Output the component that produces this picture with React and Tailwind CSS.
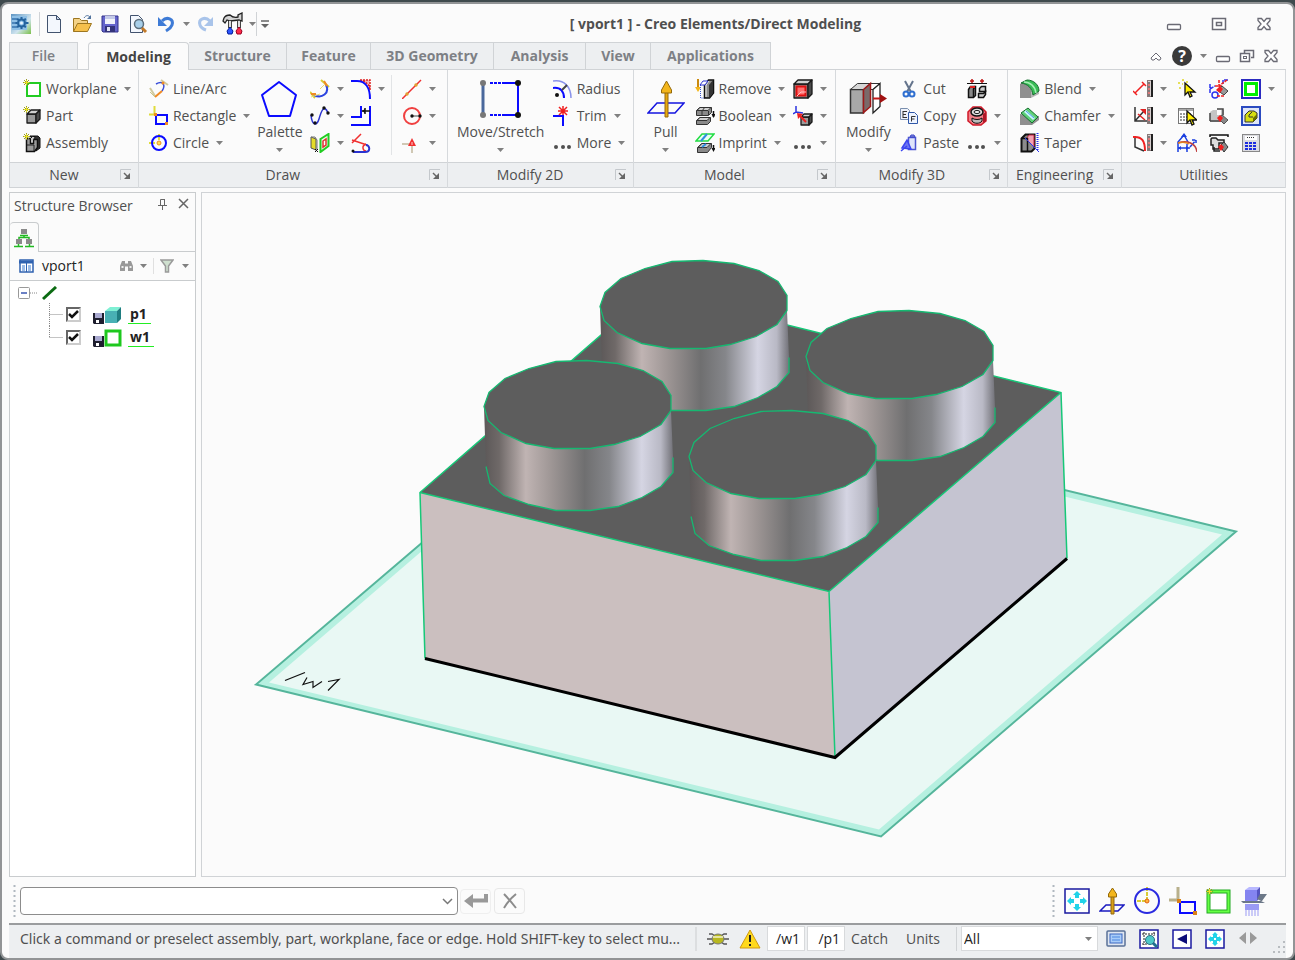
import React from "react";

/* ---------- small shared pieces ---------- */

function Svg({ w = 20, h = 20, children, className = "" }) {
  return (
    <svg
      width={w}
      height={h}
      viewBox={`0 0 ${w} ${h}`}
      fill="none"
      aria-hidden="true"
      className={`shrink-0 ${className}`}
    >
      {children}
    </svg>
  );
}

function Caret({ className = "" }) {
  return (
    <Svg w={7} h={4} className={className}>
      <path d="M0 0h7L3.5 4z" fill="#808080" />
    </Svg>
  );
}

function Spark({ x = 0, y = 0 }) {
  return (
    <g transform={`translate(${x} ${y})`}>
      <path d="M3.5 0v7M0 3.5h7M1 1l5 5M6 1L1 6" stroke="#9a9a28" />
      <path d="M3.5 1v5M1 3.5h5" stroke="#e8e22a" />
    </g>
  );
}

// grey isometric block, used by most of the solid modelling icons
function Block({ x, y, s = 9, d = 4, front = "#9a9a9a" }) {
  return (
    <g transform={`translate(${x} ${y})`} stroke="#1a1a1a" strokeWidth="1.3" strokeLinejoin="round">
      <path d={`M0 ${d}h${s}v${s}H0z`} fill={front} />
      <path d={`M0 ${d}L${d} 0h${s}l${-d} ${d}z`} fill="#d0d0d0" />
      <path d={`M${s} ${d}l${d} ${-d}v${s}l${-d} ${d}z`} fill="#4a4a4a" />
    </g>
  );
}

/* ---------- title bar icons ---------- */

const LogoIcon = () => (
  <Svg>
    <defs>
      <linearGradient id="logo" x1="0" y1="0" x2="1" y2="1">
        <stop offset="0" stopColor="#5d95c4" />
        <stop offset=".6" stopColor="#cfe4ee" />
        <stop offset="1" stopColor="#7cc04a" />
      </linearGradient>
    </defs>
    <rect width="20" height="20" fill="url(#logo)" />
    <rect x="1" y="2" width="15" height="14" fill="#8fc0e6" />
    <path d="M1 5h5M1 9h4M1 13h5" stroke="#4c86bc" strokeWidth="2" />
    <circle cx="10.5" cy="9" r="3.5" fill="#7fb6e2" stroke="#24639e" strokeWidth="2" />
    <path
      d="M10.500 3v2M10.500 13v2M4.500 9h2M14.500 9h3M6 5l2 1M15 5l-2 1M6 13l2-1M15 13l-2-1"
      stroke="#24639e"
      strokeWidth="2"
    />
    <circle cx="10.5" cy="9" r="1.5" fill="#e8f5ff" />
  </Svg>
);

const NewIcon = () => (
  <Svg>
    <path d="M3.5 1.5h9l4 4v13h-13z" fill="#f3f7fd" stroke="#42536e" />
    <path d="M12.5 1.5v4h4z" fill="#c8d6ea" stroke="#42536e" />
  </Svg>
);

const OpenIcon = () => (
  <Svg>
    <path d="M1.5 17.5v-13h6l2 2h6v4" fill="#f3d287" stroke="#9d7620" />
    <path d="M1.5 17.5l4-8h14l-4 8z" fill="#f5c04c" stroke="#9d7620" />
    <path d="M12 4c2-3 4-3 6-1" stroke="#52749e" />
    <path d="M19 1v4h-4z" fill="#52749e" />
  </Svg>
);

const SaveIcon = () => (
  <Svg>
    <path d="M2 2h16v16H3l-1-1z" fill="#6464cc" stroke="#33338a" />
    <rect x="5" y="2" width="10" height="8" fill="#f1f3fa" />
    <rect x="5" y="2" width="10" height="3" fill="#c4cae8" />
    <rect x="5" y="12" width="10" height="6" fill="#33337a" />
    <rect x="7" y="13" width="3" height="4" fill="#e3e5f4" />
  </Svg>
);

const PreviewIcon = () => (
  <Svg>
    <path d="M2.5 1.5h8l4 4v13h-12z" fill="#f3f7fd" stroke="#42536e" />
    <circle cx="11" cy="10" r="4.5" fill="#a8cfe9" stroke="#5c6e7c" strokeWidth="1.5" />
    <path d="M14 14l4 4" stroke="#c37a28" strokeWidth="3" />
  </Svg>
);

const UndoIcon = () => (
  <Svg>
    <path d="M6 7c5-5 12-2 10 4-1 3-3 4-6 6" stroke="#3e7bd6" strokeWidth="3" />
    <path d="M2 3v9h9z" fill="#3e7bd6" />
  </Svg>
);

const RedoIcon = () => (
  <Svg>
    <path d="M14 7C9 2 2 5 4 11c1 3 3 4 6 5" stroke="#a9c4ea" strokeWidth="3" />
    <path d="M17 3v9H8z" fill="#a9c4ea" />
  </Svg>
);

const ToolsIcon = () => (
  <Svg w={24} h={24}>
    <path d="M2 6c1-2 3-3 6-3 2 2 4 3 8 2V3l4-2v8l-3-1-9 1-3-1-2 3-2-2z" fill="#d4d4d4" stroke="#222" strokeWidth="1.3" />
    <path d="M8 9v7M17 9v7" stroke="#444" strokeWidth="4" />
    <path d="M8 9v6M17 9v6" stroke="#ddd" strokeWidth="2" />
    <path d="M8 15l3 4-1 3H6l-1-3z" fill="#2b55ff" stroke="#001a9a" />
    <path d="M17 15l3 4-1 3h-4l-1-3z" fill="#ff2b4a" stroke="#9a0020" />
  </Svg>
);

/* ---------- window control glyphs ---------- */

const MinGlyph = () => (
  <Svg w={16} h={16}>
    <rect x="1.5" y="8.500" width="13" height="5" rx="1" fill="#fff" stroke="#6a6a74" strokeWidth="1.3" />
  </Svg>
);

const MaxGlyph = () => (
  <Svg w={16} h={16}>
    <rect x="1.5" y="2.5" width="13" height="11" fill="#fff" stroke="#6a6a74" strokeWidth="1.5" />
    <rect x="5.5" y="6.500" width="5" height="3" stroke="#6a6a74" strokeWidth="1.5" />
  </Svg>
);

const RestoreGlyph = () => (
  <Svg w={16} h={16}>
    <path d="M5.5 5V2.5h9v7H12" stroke="#6a6a74" strokeWidth="1.5" />
    <rect x="1.5" y="5.5" width="9" height="8" fill="#fff" stroke="#6a6a74" strokeWidth="1.5" />
    <rect x="4.500" y="8.500" width="3" height="2" stroke="#6a6a74" />
  </Svg>
);

const CloseGlyph = () => (
  <Svg w={16} h={16}>
    <path
      d="M2 2.5h3.500L8 5.500l2.500-3H14v2L11 8l3 3.500v2h-3.500L8 10.500l-2.500 3H2v-2L5 8 2 4.500z"
      fill="#fff"
      stroke="#6a6a74"
      strokeWidth="1.3"
    />
  </Svg>
);

/* ---------- ribbon icons ---------- */

const WorkplaneIcon = () => (
  <Svg>
    <rect x="5" y="4" width="13" height="13" fill="#fff" stroke="#22cc22" strokeWidth="2" />
    <Spark x={1} />
  </Svg>
);

const PartIcon = () => (
  <Svg>
    <Block x={5} y={4} s={9} d={4} />
    <Spark x={1} />
  </Svg>
);

const AssemblyIcon = () => (
  <Svg>
    <path d="M8 3h8l2 2v10l-4 3V8z" fill="#333" stroke="#111" />
    <path d="M4.500 5.500h4v5h3v-4h4v8l-3 4h-8z" fill="#9a9a9a" stroke="#111" strokeWidth="1.5" />
    <path d="M8.500 5.500l2-2h3l-2 3" fill="#ccc" stroke="#111" />
    <path d="M5 12h7v6" stroke="#222" />
    <Spark x={1} />
  </Svg>
);

const LineArcIcon = () => (
  <Svg>
    <path d="M1 9l5 8M12 1l7 5" stroke="#d0caa0" strokeWidth="2" />
    <path d="M7 5c7-4 10 1 6 7" stroke="#3a4fd8" strokeWidth="1.5" />
    <path d="M13 12l-7 6" stroke="#f08a24" strokeWidth="2" />
    <path d="M1 13l5 5" stroke="#c9c48a" />
    <circle cx="14" cy="4" r="1.5" fill="#f08a24" />
  </Svg>
);

const RectangleIcon = () => (
  <Svg>
    <path d="M5.5 0v8M0 8.500h8" stroke="#e0dc3a" strokeWidth="2" />
    <rect x="7" y="9" width="11" height="9" stroke="#0b0bff" strokeWidth="2" />
    <rect x="5" y="7" width="3" height="3" fill="#f08a24" />
    <rect x="16" y="16" width="3" height="3" fill="#f08a24" />
  </Svg>
);

const CircleIcon = () => (
  <Svg>
    <path d="M10 1v6M0 10h6" stroke="#e0dc3a" strokeWidth="2" />
    <circle cx="10" cy="10" r="7" stroke="#0b0bff" strokeWidth="2" />
    <circle cx="10" cy="10" r="2" fill="#ffe14a" stroke="#f08a24" />
  </Svg>
);

const PentagonIcon = () => (
  <Svg w={40} h={42}>
    <path d="M19 4l17 13-6 21H9L2 17z" stroke="#0b0bff" strokeWidth="2" strokeLinejoin="round" />
  </Svg>
);

const ArcIcon = () => (
  <Svg>
    <path d="M0 13l5 6M11 1l8 7" stroke="#d8cd36" strokeWidth="2" />
    <path d="M4 16c8 4 16-2 12-10" stroke="#2b44e0" strokeWidth="2" />
    <path d="M1 15h5M14 2l3 5" stroke="#f08a24" strokeWidth="2" />
    <path d="M1 18l9-3M10 10l5-5" stroke="#e8dc70" />
  </Svg>
);

const SplineIcon = () => (
  <Svg>
    <path d="M1 9c1 11 6 11 8 4s5-16 9-6" stroke="#2b33d0" strokeWidth="1.5" />
    <g fill="#111">
      <circle cx="2" cy="9" r="1.700" />
      <circle cx="5" cy="17" r="1.700" />
      <circle cx="14" cy="2" r="1.700" />
      <circle cx="18" cy="7" r="1.700" />
    </g>
  </Svg>
);

const ProjectIcon = () => (
  <Svg>
    <path d="M1 4v11l5 2V6z" fill="#e4dc2a" stroke="#555" />
    <path d="M1 4h4l2 3v9" stroke="#777" />
    <path d="M5 16l3 3M5 19l3-3" stroke="#111" />
    <path d="M10.5 6l8-5v12l-8 6z" fill="#e8ffe8" stroke="#22cc22" strokeWidth="2" />
    <path d="M13 8l3-2v6l-3 2z" fill="#fff" stroke="#e03030" strokeWidth="1.5" />
  </Svg>
);

const FilletIcon = () => (
  <Svg>
    <path d="M9 1h10v10c0-4-4-9-10-10z" fill="#f7b0b0" stroke="#e02020" strokeWidth="1.5" strokeDasharray="2 1" />
    <path d="M0 2h6c8 0 13 6 13 18" stroke="#0b0bff" strokeWidth="2" />
  </Svg>
);

const OffsetIcon = () => (
  <Svg>
    <path d="M0 11h10V0M0 19h19V0" stroke="#0b0bff" strokeWidth="2" />
    <path d="M11 5h8M14 2v6" stroke="#111" strokeWidth="1.5" />
    <path d="M11 5l3-2v4z" fill="#111" />
  </Svg>
);

const TangentIcon = () => (
  <Svg>
    <path d="M1 7l15 5M1 10l9-9" stroke="#f03030" strokeWidth="1.5" />
    <path d="M15 11c-5 2-3 7 0 7" stroke="#f03030" strokeWidth="1.5" />
    <path d="M2 19h12c6 0 5-7 1-7" stroke="#2b33d0" strokeWidth="2" />
    <circle cx="2" cy="18" r="1.5" fill="#111" />
  </Svg>
);

const RedLineIcon = () => (
  <Svg>
    <path d="M0 20L19 1" stroke="#f03030" strokeWidth="1.5" />
    <circle cx="5" cy="15" r="1.700" fill="#e0a030" />
    <circle cx="14" cy="6" r="1.700" fill="#e0a030" />
  </Svg>
);

const RedCircleIcon = () => (
  <Svg>
    <circle cx="10" cy="10" r="8" stroke="#f04040" strokeWidth="2" />
    <path d="M10 10h8" stroke="#444" />
    <circle cx="10" cy="10" r="1.700" fill="#111" />
    <circle cx="18" cy="10" r="1.700" fill="#111" />
  </Svg>
);

const RedArrowIcon = () => (
  <Svg>
    <path d="M0 11h10v9" stroke="#d0c8b4" strokeWidth="2" />
    <path d="M10 5l4 8H6z" fill="#f03030" />
    <path d="M10 9v3" stroke="#ffd0d0" />
  </Svg>
);

const StretchIcon = () => (
  <Svg w={42} h={40}>
    <path d="M3 4v32" stroke="#4a689c" strokeWidth="3" />
    <path d="M10 4h14M10 36h14" stroke="#0b0bff" strokeWidth="2" strokeDasharray="3 1" />
    <path d="M24 4h14v32H24" stroke="#0b0bff" strokeWidth="2" />
    <circle cx="3" cy="4" r="3" fill="#777" />
    <circle cx="3" cy="36" r="3" fill="#777" />
    <circle cx="38" cy="4" r="3" fill="#111" />
    <circle cx="38" cy="36" r="3" fill="#111" />
  </Svg>
);

const RadiusIcon = () => (
  <Svg>
    <path d="M0 2c11-2 18 6 18 17" stroke="#8a93ea" strokeWidth="1.5" />
    <path d="M0 9c8-1 11 4 11 10" stroke="#0b0bff" strokeWidth="2" />
    <circle cx="4" cy="16" r="2" fill="#111" />
    <path d="M9 11l5-5" stroke="#444" strokeWidth="2" />
  </Svg>
);

const TrimIcon = () => (
  <Svg>
    <path d="M0 10h10v10" stroke="#0b0bff" strokeWidth="2" />
    <path d="M10 0v9M5 5h10M6 1l8 8M14 1L6 9" stroke="#f02020" strokeWidth="1.5" />
  </Svg>
);

const MoreIcon = () => (
  <Svg>
    <g fill="#505050">
      <circle cx="3" cy="14" r="2" />
      <circle cx="10" cy="14" r="2" />
      <circle cx="16" cy="14" r="2" />
    </g>
  </Svg>
);

const PullIcon = () => (
  <Svg w={38} h={40}>
    <path d="M1 34l9-10h27l-9 10z" stroke="#1515e0" strokeWidth="1.5" />
    <path d="M18 38V12h3v26z" fill="#e8a810" stroke="#94690a" />
    <path d="M19.500 2l5 9v3h-10v-3z" fill="#f3b61c" stroke="#94690a" />
  </Svg>
);

const RemoveIcon = () => (
  <Svg>
    <path d="M3 0v9" stroke="#c98a10" strokeWidth="2" />
    <path d="M0 8h6l-3 5z" fill="#f3b61c" />
    <path d="M5.5 6v13h4" stroke="#3a56d0" strokeDasharray="1 1" />
    <path d="M9.500 6l4-5h5v13l-4 5h-5z" fill="#8c8c8c" stroke="#111" strokeWidth="1.5" />
    <path d="M14 6l4-5v13l-4 5z" fill="#333" />
    <path d="M11 18V6l3-4" stroke="#eee" />
    <path d="M5 6l3-4h5l-3 4z" fill="#fff" stroke="#2b33d0" />
  </Svg>
);

const BooleanIcon = () => (
  <Svg>
    <path d="M1.5 4.500l3-3h12v5l-3 3h-12z" fill="#8a8a8a" stroke="#333" strokeLinejoin="round" />
    <path d="M2 4.500h11l3-3H5z" fill="#d0d0d0" stroke="#333" />
    <path d="M7 5l3-4M7 5v4M13.500 5v4" stroke="#333" />
    <path d="M1.500 14.500l3-3h11v4l-3 3h-11z" fill="#8a8a8a" stroke="#333" strokeLinejoin="round" />
    <path d="M2 14.500h10l3-3H5z" fill="#d0d0d0" stroke="#333" />
    <path d="M18.500 5v6" stroke="#111" strokeWidth="1.500" />
    <path d="M16.500 8h4l-2 4z" fill="#111" />
  </Svg>
);

const ImprintIcon = () => (
  <Svg>
    <path d="M1 8l6-7h12l-6 7z" fill="#eafff0" stroke="#22dd44" strokeWidth="1.5" />
    <path d="M6 8l6-7" stroke="#2f8fe0" strokeWidth="2" />
    <path d="M2.5 14.500l4-4h10v4l-4 5h-10z" fill="#8a8a8a" stroke="#333" strokeLinejoin="round" />
    <path d="M3 14.500h9l4-4H7z" fill="#d0d0d0" stroke="#333" />
    <path d="M7 14l4-3" stroke="#2f8fe0" strokeWidth="2" />
    <path d="M18.500 12v5" stroke="#111" strokeWidth="1.500" />
    <path d="M16.500 15h4l-2 4z" fill="#111" />
  </Svg>
);

const ShellIcon = () => (
  <Svg>
    <Block x={1} y={1} s={14} d={4} front="#8a8a8a" />
    <rect x="3.500" y="7.500" width="9" height="9" fill="#ff7070" stroke="#e01010" strokeWidth="2" />
    <path d="M4 17l4-4h5" stroke="#ffc0c0" />
  </Svg>
);

const AlignIcon = () => (
  <Svg>
    <path d="M3 0v6l-3 2M3 6l7 1" stroke="#2b33e0" strokeWidth="1.5" />
    <Block x={8} y={8} s={8} d={3} />
    <path d="M6 9l7 7" stroke="#f02020" strokeWidth="2" />
    <path d="M4 7l6 1-5 5z" fill="#f02020" />
  </Svg>
);

const Modify3DIcon = () => (
  <Svg w={40} h={38}>
    <path d="M15 9.500l8-6h9l-7 6z" fill="#fff" stroke="#333" />
    <path d="M25 33V9.500l7-6v23z" fill="#fff" stroke="#222" strokeWidth="1.300" />
    <path d="M2.500 9.500h13V33h-13z" fill="#a8a8a8" stroke="#333" strokeWidth="1.500" />
    <path d="M2.500 9.500l7-6h13l-7 6z" fill="#d6d6d6" stroke="#333" />
    <path d="M15.500 9.500l7-6v23l-7 6z" fill="#7a6a6a" stroke="#a01818" strokeWidth="1.5" />
    <path d="M25 18.500h9" stroke="#c01818" strokeWidth="2" />
    <path d="M32 14l7 4.500-7 4.500z" fill="#a01010" />
  </Svg>
);

const CutIcon = () => (
  <Svg>
    <path d="M6 2l6 11M14 2L8 13" stroke="#64748c" strokeWidth="2" />
    <circle cx="7" cy="15" r="2.5" stroke="#2f6fd0" strokeWidth="2" />
    <circle cx="13" cy="15" r="2.5" stroke="#2f6fd0" strokeWidth="2" />
  </Svg>
);

const CopyIcon = () => (
  <Svg>
    <path d="M1.500 2.500h7l2 2v9h-9z" fill="#eef2fa" stroke="#7a8fae" />
    <path d="M4 5.500h4M4 8.500h3M4 11.500h4M4 5v7" stroke="#333" />
    <path d="M9.500 6.500h6l3 3v8h-9z" fill="#eef4ff" stroke="#2f57a8" />
    <path d="M12.500 15.500v-5h4M12.500 13h3" stroke="#333" />
  </Svg>
);

const PasteIcon = () => (
  <Svg>
    <rect x="9.500" y="4.500" width="7" height="12" fill="#dfe4fa" stroke="#4b55d0" strokeWidth="1.5" />
    <path d="M11 4l1-2h3l1 2z" fill="#8890d8" stroke="#3b45c8" />
    <path d="M2 18l6-5M8 7l4 9-9-1z" fill="#6d76f0" stroke="#3b45f0" strokeWidth="1.5" />
  </Svg>
);

const PatternIcon = () => (
  <Svg>
    <path d="M0 4.500h20" stroke="#111" />
    <path d="M5 0v4M15 0v4M3 2h4M13 2h4" stroke="#c01818" strokeWidth="1.5" />
    <path d="M1.500 10.500l2-3h5v9l-2 2h-5z" fill="#888" stroke="#111" strokeWidth="1.5" />
    <path d="M6.500 18v-8l2-3" stroke="#111" strokeWidth="1.500" />
    <path d="M12.500 9.500l2-2h4v8l-2 3h-5v-4h5l2-2h-6z" fill="#ccc" stroke="#111" strokeWidth="1.5" />
    <path d="M3 8h5" stroke="#e02020" strokeWidth="2" />
  </Svg>
);

const FaceOpIcon = () => (
  <Svg>
    <path d="M1 6l5-5h8l5 5v9l-5 4H6l-5-4z" fill="#f08088" stroke="#d01828" strokeWidth="1.5" />
    <ellipse cx="10" cy="6" rx="6" ry="4" fill="#ddd" stroke="#111" strokeWidth="1.5" />
    <ellipse cx="10" cy="6" rx="3" ry="1.500" fill="#fff" stroke="#111" />
    <path d="M5 12v3c2 3 8 3 10 0v-3c-2 2-8 2-10 0z" fill="#bbb" stroke="#111" />
    <path d="M16 8v9l3-2V6z" fill="#b01828" />
  </Svg>
);

const BlendIcon = () => (
  <Svg>
    <path d="M0 5l6-4 5 9v9H0z" fill="#8f8f8f" />
    <path d="M11 19V12l8-2v5z" fill="#b4b4b4" />
    <path d="M1 4l6-3c7 0 12 5 12 11l-6 4C12 9 8 5 1 4z" fill="#37bb55" stroke="#15702f" />
    <path d="M4 3c6 0 11 4 12 11" stroke="#a4efb4" strokeWidth="1.5" />
  </Svg>
);

const ChamferIcon = () => (
  <Svg>
    <path d="M0 8v11h12l7-5v-4z" fill="#8f8f8f" />
    <path d="M1 7l7-5 10 9-6 6z" fill="#5fd077" stroke="#15702f" />
    <path d="M5 5l9 8" stroke="#c8f4ff" strokeWidth="3" />
    <path d="M6 5l8 7" stroke="#4a9ce0" />
  </Svg>
);

const TaperIcon = () => (
  <Svg>
    <path d="M1.500 5.500l4-4h9v14l-3 3h-10z" fill="#8c8c8c" stroke="#111" strokeWidth="2" />
    <path d="M6 6l3-4h5v12z" fill="#f3a0b0" stroke="#c02040" />
    <path d="M1.500 5.500h6v13" stroke="#111" strokeWidth="1.500" />
    <path d="M17.500 0v17" stroke="#2b33f0" strokeDasharray="1 1" strokeWidth="2" />
    <path d="M5 5l14 14" stroke="#2b33f0" />
  </Svg>
);

const Ruler = () => (
  <g>
    <rect x="14.500" y="1.500" width="4" height="16" fill="#d8d0d0" stroke="#8a7a7a" />
    <path d="M19 1v17" stroke="#222" strokeWidth="2" />
    <path d="M15 4h2M15 8h2M15 12h2M15 16h2" stroke="#222" />
    <path d="M15 6h2M15 10h2M15 14h2" stroke="#e02020" />
  </g>
);

const MeasureLineIcon = () => (
  <Svg>
    <path d="M2 14L11 5M0 12l4 4M9 3l4 4" stroke="#f02020" strokeWidth="1.5" />
    <Ruler />
  </Svg>
);

const MeasureAngleIcon = () => (
  <Svg>
    <path d="M2 1v14h12M2 15L11 5" stroke="#333" strokeWidth="1.5" />
    <path d="M5 8l7 6" stroke="#e02020" strokeWidth="1.500" />
    <path d="M13 3v6L7 3z" fill="#e02020" />
    <Ruler />
  </Svg>
);

const MeasureArcIcon = () => (
  <Svg>
    <path d="M2 3v11l9 4" stroke="#333" strokeWidth="1.5" />
    <path d="M0 4c9-1 12 4 12 14" stroke="#f02020" strokeWidth="2" />
    <Ruler />
  </Svg>
);

const CursorShape = ({ x = 0, y = 0 }) => (
  <path
    d="M0 0v12l3-3 2 5 2-1-2-4h5z"
    transform={`translate(${x} ${y})`}
    fill="#ffee00"
    stroke="#111"
    strokeWidth="1.300"
  />
);

const SelectIcon = () => (
  <Svg>
    <path d="M5 1h2M1 4h2M2 9h2M9 3h2M5 5h1" stroke="#e6e05a" strokeWidth="2" />
    <CursorShape x={8} y={4} />
  </Svg>
);

const SelectListIcon = () => (
  <Svg>
    <rect x="1.500" y="2.500" width="15" height="15" fill="#fff" stroke="#777" />
    <path d="M2 4h14" stroke="#aaa" strokeWidth="2" />
    <path d="M3 8h12M3 11h12M3 14h12" stroke="#333" strokeDasharray="2 1" />
    <CursorShape x={10} y={5} />
  </Svg>
);

const MeasureToolIcon = () => (
  <Svg>
    <path d="M1 5v10M1 10l5-3M14 5V1h5" stroke="#2b33f0" strokeWidth="1.5" strokeDasharray="4 1" />
    <circle cx="6" cy="16" r="3" stroke="#2b33f0" strokeWidth="1.500" />
    <path d="M10 1v9M6 7h8M8 17h7M18 1l-8 6" stroke="#f02020" strokeWidth="1.500" strokeDasharray="3 1" />
    <path d="M8 11l5-4 6 5-4 4z" fill="#999" stroke="#444" />
    <path d="M7 11l4-4 3 3-3 4z" fill="#f02020" />
  </Svg>
);

const DimIcon = () => (
  <Svg>
    <path d="M1 19V9l6-7 4 7M1 15h12M10 11v8" stroke="#1b3fe0" strokeWidth="1.5" />
    <path d="M4 4l3-4 3 4zM1 15l3-2v4zM12 15l-3-2v4z" fill="#1b3fe0" />
    <path d="M13 14l6-7M15 7h4v4" stroke="#1b3fe0" strokeWidth="1.500" strokeDasharray="3 1" />
    <path d="M1 10c9-3 18 0 19 9" stroke="#c04040" strokeWidth="1.5" />
    <path d="M1 10c4-1 8-1 11 1" stroke="#e08020" strokeWidth="1.5" />
  </Svg>
);

const CheckPartIcon = () => (
  <Svg>
    <path d="M1 6l3-2h4v5h4V4h3v9l-3 3H1z" fill="#c4c4c4" />
    <path d="M1 15h11l3-3M8 3h6v6M1 15V7" stroke="#444" strokeWidth="1.5" />
    <path d="M9 12l4-3 6 5-4 4z" fill="#888" stroke="#555" />
    <path d="M8 12l3-3 3 3-3 4z" fill="#f02020" />
  </Svg>
);

const CheckAsmIcon = () => (
  <Svg>
    <path d="M1 4V2h18v2" stroke="#111" strokeWidth="1.500" />
    <path d="M3 5h4l2 2h6v3h-5v6H4v-4H2V6z" fill="#ddd" stroke="#222" strokeWidth="1.5" />
    <path d="M5 14v4h6" stroke="#222" strokeWidth="1.500" />
    <path d="M11 13l4-4 4 5-4 5z" fill="#888" stroke="#333" />
    <path d="M9 14l3-3 3 3-3 4z" fill="#f02020" />
  </Svg>
);

const ActiveWpIcon = () => (
  <Svg>
    <rect x="1" y="1" width="18" height="18" fill="#fff" stroke="#2a2ac0" strokeWidth="2" />
    <rect x="4.500" y="4.500" width="11" height="11" fill="#fff" stroke="#00ee00" strokeWidth="3" />
  </Svg>
);

const ActivePartIcon = () => (
  <Svg>
    <rect x="1" y="1" width="18" height="18" fill="#dfe6f6" stroke="#2a4ac0" strokeWidth="2" />
    <path d="M4 9l4-4h5l3 2v5l-4 4H4z" fill="#d6de10" stroke="#333" />
    <path d="M12 16v-4l4-4v4z" fill="#6a7000" />
    <path d="M8 9v2h4M8 9l3-3" stroke="#333" />
  </Svg>
);

const CalcIcon = () => (
  <Svg>
    <rect x="1.500" y="1.500" width="17" height="17" fill="#dcdce0" stroke="#888" />
    <rect x="4" y="3" width="12" height="4" fill="#fff" />
    <path d="M6 4.500h8" stroke="#333" strokeDasharray="1 1" />
    <path d="M4 10h12M4 13h12M4 16h12" stroke="#1b2be0" strokeWidth="2" strokeDasharray="3 1" />
  </Svg>
);

/* ---------- ribbon building blocks ---------- */

function Cmd({ icon, label, caret, name }) {
  return (
    <button
      type="button"
      aria-label={label || name}
      className="flex h-[27px] items-center gap-1 whitespace-nowrap text-[#505050]"
    >
      {icon}
      {label && <span>{label}</span>}
      {caret && <Caret className="ml-[3px]" />}
    </button>
  );
}

function BigCmd({ icon, label, className = "" }) {
  return (
    <button
      type="button"
      className={`flex flex-col items-center pt-[3px] text-[#505050] ${className}`}
    >
      <span className="flex h-[42px] items-center">{icon}</span>
      <span className="mt-0.5 leading-5">{label}</span>
      <Caret className="mt-1.5" />
    </button>
  );
}

function Col({ children, className = "" }) {
  return <div className={`flex shrink-0 flex-col items-start ${className}`}>{children}</div>;
}

function Group({ title, children, launcher = true, className = "" }) {
  return (
    <section className="flex min-w-0 flex-col border-r border-[#d6d9dc]">
      <div className={`flex h-[92px] pt-[5px] ${className}`}>{children}</div>
      <div className="flex h-[26px] items-center border-y border-[#d0d3d6] bg-[#edeff1] text-[#505050]">
        <h2 className="flex-1 text-center">{title}</h2>
        {launcher && (
          <button type="button" aria-label={`${title} options`} className="mr-1 flex size-4 items-center justify-center">
            <Svg w={12} h={12}>
              <path d="M.5 11V.5H11" stroke="#c4c8cc" />
              <path d="M4 4l4 4" stroke="#666" strokeWidth="1.5" />
              <path d="M10 4v6H4z" fill="#666" />
            </Svg>
          </button>
        )}
      </div>
    </section>
  );
}

function Ribbon() {
  return (
    <div className="grid grid-cols-[129fr_309fr_186fr_203fr_172fr_114fr_164fr] border-l border-[#d0d3d6]">
      <Group title="New" className="pl-3">
        <Col>
          <Cmd icon={<WorkplaneIcon />} label="Workplane" caret />
          <Cmd icon={<PartIcon />} label="Part" />
          <Cmd icon={<AssemblyIcon />} label="Assembly" />
        </Col>
      </Group>

      <Group title="Draw" className="pl-2.5">
        <Col className="w-[107px]">
          <Cmd icon={<LineArcIcon />} label="Line/Arc" />
          <Cmd icon={<RectangleIcon />} label="Rectangle" caret />
          <Cmd icon={<CircleIcon />} label="Circle" caret />
        </Col>
        <BigCmd icon={<PentagonIcon />} label="Palette" className="w-12" />
        <Col className="ml-1.5 w-[41px]">
          <Cmd icon={<ArcIcon />} name="Arc" caret />
          <Cmd icon={<SplineIcon />} name="Spline" caret />
          <Cmd icon={<ProjectIcon />} name="Project" caret />
        </Col>
        <Col className="w-[40px]">
          <Cmd icon={<FilletIcon />} name="Fillet" caret />
          <Cmd icon={<OffsetIcon />} name="Offset" />
          <Cmd icon={<TangentIcon />} name="Tangent" />
        </Col>
        <div className="mr-2.5 h-[80px] border-l border-[#e2e4e6]" />
        <Col>
          <Cmd icon={<RedLineIcon />} name="Construction line" caret />
          <Cmd icon={<RedCircleIcon />} name="Construction circle" caret />
          <Cmd icon={<RedArrowIcon />} name="Construction point" caret />
        </Col>
      </Group>

      <Group title="Modify 2D" className="pl-[7px]">
        <BigCmd icon={<StretchIcon />} label="Move/Stretch" className="w-[92px]" />
        <Col className="ml-1.5">
          <Cmd icon={<RadiusIcon />} label="Radius" />
          <Cmd icon={<TrimIcon />} label="Trim" caret />
          <Cmd icon={<MoreIcon />} label="More" caret />
        </Col>
      </Group>

      <Group title="Model" className="pl-[11px]">
        <BigCmd icon={<PullIcon />} label="Pull" className="w-[42px]" />
        <Col className="ml-2 w-[98px]">
          <Cmd icon={<RemoveIcon />} label="Remove" caret />
          <Cmd icon={<BooleanIcon />} label="Boolean" caret />
          <Cmd icon={<ImprintIcon />} label="Imprint" caret />
        </Col>
        <Col>
          <Cmd icon={<ShellIcon />} name="Shell" caret />
          <Cmd icon={<AlignIcon />} name="Align" caret />
          <Cmd icon={<MoreIcon />} name="More modeling" caret />
        </Col>
      </Group>

      <Group title="Modify 3D" className="pl-2">
        <BigCmd icon={<Modify3DIcon />} label="Modify" className="w-12" />
        <Col className="ml-[7px] w-[68px]">
          <Cmd icon={<CutIcon />} label="Cut" />
          <Cmd icon={<CopyIcon />} label="Copy" />
          <Cmd icon={<PasteIcon />} label="Paste" />
        </Col>
        <Col>
          <Cmd icon={<PatternIcon />} name="Pattern" />
          <Cmd icon={<FaceOpIcon />} name="Face operation" caret />
          <Cmd icon={<MoreIcon />} name="More 3D" caret />
        </Col>
      </Group>

      <Group title="Engineering" className="pl-3">
        <Col>
          <Cmd icon={<BlendIcon />} label="Blend" caret />
          <Cmd icon={<ChamferIcon />} label="Chamfer" caret />
          <Cmd icon={<TaperIcon />} label="Taper" />
        </Col>
      </Group>

      <Group title="Utilities" launcher={false} className="pl-[11px]">
        <Col className="w-11">
          <Cmd icon={<MeasureLineIcon />} name="Measure distance" caret />
          <Cmd icon={<MeasureAngleIcon />} name="Measure angle" caret />
          <Cmd icon={<MeasureArcIcon />} name="Measure arc" caret />
        </Col>
        <Col className="w-8">
          <Cmd icon={<SelectIcon />} name="Select" />
          <Cmd icon={<SelectListIcon />} name="Selection list" />
          <Cmd icon={<DimIcon />} name="Dimension" />
        </Col>
        <Col className="w-8">
          <Cmd icon={<MeasureToolIcon />} name="Inquire" />
          <Cmd icon={<CheckPartIcon />} name="Check part" />
          <Cmd icon={<CheckAsmIcon />} name="Check assembly" />
        </Col>
        <Col>
          <Cmd icon={<ActiveWpIcon />} name="Active workplane" caret />
          <Cmd icon={<ActivePartIcon />} name="Active part" />
          <Cmd icon={<CalcIcon />} name="Calculator" />
        </Col>
      </Group>
    </div>
  );
}

/* ---------- title bar and tabs ---------- */

function IconButton({ label, children, className = "" }) {
  return (
    <button type="button" aria-label={label} className={`flex items-center justify-center ${className}`}>
      {children}
    </button>
  );
}

function TitleBar() {
  return (
    <header className="flex h-[38px] items-center pt-0.5 pr-3.5 pl-0.5">
      <div className="flex flex-1 items-center">
        <LogoIcon />
        <div className="ml-2 h-6 border-l border-[#d0d3d6]" />
        <div className="flex items-center">
          <IconButton label="New" className="w-7"><NewIcon /></IconButton>
          <IconButton label="Open" className="w-7"><OpenIcon /></IconButton>
          <IconButton label="Save" className="w-7"><SaveIcon /></IconButton>
          <IconButton label="Preview" className="w-7"><PreviewIcon /></IconButton>
          <IconButton label="Undo" className="w-7"><UndoIcon /></IconButton>
          <IconButton label="Undo list" className="w-3"><Caret /></IconButton>
          <IconButton label="Redo" className="w-7"><RedoIcon /></IconButton>
          <IconButton label="Tools" className="w-7"><ToolsIcon /></IconButton>
          <IconButton label="Tools list" className="w-2"><Caret /></IconButton>
        </div>
        <div className="h-6 border-l border-[#d0d3d6]" />
        <IconButton label="Customize" className="ml-1 w-2">
          <Svg w={8} h={8}>
            <path d="M0 1h8" stroke="#666" strokeWidth="1.5" />
            <path d="M0 4h8L4 8z" fill="#666" />
          </Svg>
        </IconButton>
      </div>
      <h1 className="ml-[148px] font-bold text-[#4f4f4f]">
        [ vport1 ] - Creo Elements/Direct Modeling
      </h1>
      <div className="flex flex-1 justify-end gap-[29px]">
        <IconButton label="Minimize"><MinGlyph /></IconButton>
        <IconButton label="Maximize"><MaxGlyph /></IconButton>
        <IconButton label="Close"><CloseGlyph /></IconButton>
      </div>
    </header>
  );
}

const TABS = [
  { name: "Structure", width: "w-[98px]" },
  { name: "Feature", width: "w-[84px]" },
  { name: "3D Geometry", width: "w-[123px]" },
  { name: "Analysis", width: "w-[92px]" },
  { name: "View", width: "w-[65px]" },
  { name: "Applications", width: "w-[120px]" },
];

function TabRow() {
  return (
    <nav className="flex h-7 items-stretch border-b border-[#d0d3d6] text-[#7d8085]">
      <button type="button" className="w-[69px] border border-b-0 border-[#d0d3d6] bg-[#edeff1] font-semibold">
        File
      </button>
      <button
        type="button"
        className="-mb-px ml-2.5 w-[101px] rounded-t border border-b-0 border-[#d0d3d6] bg-[#fbfbfb] font-bold text-[#444]"
      >
        Modeling
      </button>
      {TABS.map((tab) => (
        <button
          key={tab.name}
          type="button"
          className={`${tab.width} border-t border-r border-[#d0d3d6] bg-[#edeff1] font-bold`}
        >
          {tab.name}
        </button>
      ))}
      <div className="flex flex-1 items-center justify-end pr-[7px]">
        <IconButton label="Collapse ribbon" className="mr-2.5">
          <Svg w={12} h={10}>
            <path d="M1 7l5-5 5 5-1 2H8L6 7 4 9H2z" fill="#fff" stroke="#6a6a74" />
          </Svg>
        </IconButton>
        <IconButton label="Help" className="mr-2">
          <span className="flex size-5 items-center justify-center rounded-full bg-[#3a3a3a] text-base leading-5 font-bold text-white">
            ?
          </span>
        </IconButton>
        <IconButton label="Help list" className="mr-2"><Caret /></IconButton>
        <IconButton label="Minimize view" className="mr-2"><MinGlyph /></IconButton>
        <IconButton label="Restore view" className="mr-2"><RestoreGlyph /></IconButton>
        <IconButton label="Close view"><CloseGlyph /></IconButton>
      </div>
    </nav>
  );
}

/* ---------- structure browser ---------- */

const FloppyIcon = () => (
  <Svg w={11} h={11}>
    <path d="M0 0h11v11H1l-1-1z" fill="#1e1e2e" />
    <rect x="2" y="0" width="7" height="5" fill="#a9a9d0" />
    <rect x="3" y="7" width="3" height="3" fill="#fff" />
  </Svg>
);

const CubeIcon = () => (
  <Svg w={18} h={18}>
    <path d="M1 5l5-4h11l-4 4z" fill="#7ff0d4" />
    <path d="M1 5h12v12H1z" fill="#48b0b4" />
    <path d="M13 5l4-4v12l-4 4z" fill="#1f7d80" />
  </Svg>
);

const FrameIcon = () => (
  <Svg w={18} h={18}>
    <rect x="2" y="2" width="14" height="14" fill="#fff" stroke="#1ec81e" strokeWidth="3" />
  </Svg>
);

function TreeItem({ name, icon, last }) {
  return (
    <li className="flex h-[23px] items-center">
      <Svg w={14} h={23}>
        <path d={last ? "M.5 0v12M.5 11.5h13" : "M.5 0v23M.5 11.5h13"} stroke="#888" strokeDasharray="1 1" />
      </Svg>
      <label className="ml-[3px] flex items-center">
        <span className="grid size-[15px] place-items-center">
          <input
            type="checkbox"
            defaultChecked
            className="peer col-start-1 row-start-1 size-[15px] appearance-none border-2 border-[#666] border-r-[#ccc] border-b-[#ccc] bg-white"
          />
          <svg
            viewBox="0 0 11 11"
            className="pointer-events-none invisible col-start-1 row-start-1 size-[11px] peer-checked:visible"
            fill="none"
            aria-hidden="true"
          >
            <path d="M1 5l3 3 6-6" stroke="#111" strokeWidth="2.500" />
          </svg>
        </span>
        <span className="ml-3 flex items-end">
          <FloppyIcon />
          {icon}
        </span>
        <span className="ml-1.5 border-b border-[#22ee22] pr-1 pl-0.5 leading-[18px] font-bold text-[#222]">{name}</span>
      </label>
    </li>
  );
}

function StructureBrowser() {
  return (
    <aside className="flex w-[187px] shrink-0 flex-col border border-[#c9ccce] bg-[#fbfbfb]">
      <div className="flex h-[29px] items-center pr-1.5 pb-1 pl-1 text-[#505050]">
        <h2 className="flex-1 whitespace-nowrap">Structure Browser</h2>
        <IconButton label="Pin" className="mb-1">
          <Svg w={10} h={12}>
            <path d="M2.500 7V1.500h4V7M0 7.500h9M4.500 8v4M6.500 1v6" stroke="#666" />
          </Svg>
        </IconButton>
        <IconButton label="Close browser" className="mb-1 ml-2.5">
          <Svg w={11} h={11}>
            <path d="M1 1l9 9M10 1l-9 9" stroke="#666" strokeWidth="1.5" />
          </Svg>
        </IconButton>
      </div>
      <div className="flex h-[30px] border-b border-[#c9ccce]">
        <button
          type="button"
          aria-label="Structure tree"
          className="-mb-px flex w-[29px] items-center justify-center rounded-t border-t border-r border-[#c9ccce] bg-[#fbfbfb]"
        >
          <Svg>
            <path d="M10 7v3M5 12V9.500h10V12" stroke="#22bb22" strokeWidth="1.500" />
            <rect x="7" y="1" width="6" height="5" fill="#8a8a8a" />
            <rect x="2" y="11" width="6" height="5" fill="#8a8a8a" />
            <rect x="12" y="11" width="6" height="5" fill="#8a8a8a" />
            <path d="M6 7.500h8M0 18.500h9M11 18.500h9M4.500 16v2M15.500 16v2" stroke="#22bb22" strokeWidth="1.500" />
          </Svg>
        </button>
      </div>
      <div className="flex h-[29px] items-center border-b border-[#c9ccce] pr-1.5 pl-2">
        <Svg w={16} h={16}>
          <rect x="2" y="2" width="13" height="12" fill="#fff" stroke="#2f62b0" strokeWidth="1.5" />
          <path d="M1 4h14" stroke="#2f62b0" strokeWidth="3" />
          <path d="M4 8h3M4 10h3M4 12h3M10 8h3M10 10h3M10 12h3" stroke="#3a7bd0" />
          <path d="M8.500 5v9" stroke="#2f62b0" />
        </Svg>
        <span className="ml-2 flex-1 text-[#222]">vport1</span>
        <IconButton label="Find">
          <Svg w={15} h={14}>
            <path d="M1 7l2-5h3v10H1zM14 7l-2-5H9v10h5z" fill="#999" />
            <path d="M6 6h3" stroke="#999" strokeWidth="3" />
            <path d="M2.500 8h2M10.500 8h2" stroke="#eee" strokeWidth="2" />
          </Svg>
        </IconButton>
        <IconButton label="Find options" className="ml-1.5"><Caret /></IconButton>
        <div className="mx-1.5 h-4 border-l border-[#e0e0e0]" />
        <IconButton label="Filter">
          <Svg w={14} h={14}>
            <path d="M1 1h12L8.500 7v6h-3V7z" fill="#cfe0cf" stroke="#9a9a9a" strokeWidth="1.500" />
          </Svg>
        </IconButton>
        <IconButton label="Filter options" className="ml-2"><Caret /></IconButton>
      </div>
      <div className="flex-1 bg-white pt-0.5 pl-2">
        <div className="flex h-5 items-center">
          <IconButton label="Collapse root">
            <Svg w={12} h={12}>
              <rect x=".5" y=".5" width="11" height="11" rx="1" fill="#fff" stroke="#999" />
              <path d="M3 6h6" stroke="#3a56b0" strokeWidth="1.5" />
            </Svg>
          </IconButton>
          <Svg w={8} h={2} className="mr-1">
            <path d="M0 1h8" stroke="#888" strokeDasharray="1 1" />
          </Svg>
          <Svg w={15} h={15}>
            <path d="M1 13L14 1" stroke="#0b6b12" strokeWidth="3" />
          </Svg>
        </div>
        <ul className="ml-[31px]">
          <TreeItem name="p1" icon={<CubeIcon />} />
          <TreeItem name="w1" icon={<FrameIcon />} last />
        </ul>
      </div>
    </aside>
  );
}

/* ---------- 3D viewport ---------- */

// upper rim and visible lower rim of one stud, relative to its leftmost point
const RIM =
  "0,0 5,-14 21,-28 45,-38 72,-45 103,-46 134,-43 159,-36 178,-25 187,-11 187,4 177,18 156,30 130,38 106,42 70,42 42,37 17,26 4,14";
const BASE = "2,60 6,77 20,89 45,98 72,104 106,104 134,100 158,91 177,80 189,66 189,51";

const STUDS = [
  [600, 307],
  [806, 357],
  [484, 407],
  [689, 457],
];

function Stud({ x, y }) {
  return (
    <g transform={`translate(${x} ${y})`}>
      <polygon points={`0,0 ${BASE} 187,4 187,-5`} fill="url(#stud)" />
      <polyline points={BASE} stroke="#16b871" strokeWidth="1.300" fill="none" />
      <polygon points={RIM} fill="#5d5d5d" stroke="#16b871" strokeWidth="1.300" />
    </g>
  );
}

function Viewport() {
  return (
    <main className="min-w-0 flex-1 border border-[#d0d3d6] bg-[#fbfbfb]">
      <svg viewBox="202 194 1083 682" className="size-full" role="img" aria-label="Part p1 on workplane w1">
        <defs>
          <linearGradient id="stud" gradientUnits="userSpaceOnUse" x1="0" y1="0" x2="190" y2="0">
            <stop offset="0" stopColor="#5c5858" />
            <stop offset=".08" stopColor="#6f6968" />
            <stop offset=".22" stopColor="#c0b4b3" />
            <stop offset=".35" stopColor="#9f9796" />
            <stop offset=".53" stopColor="#6f6f70" />
            <stop offset=".66" stopColor="#85868a" />
            <stop offset=".83" stopColor="#d5d5e3" />
            <stop offset=".93" stopColor="#b9b9c5" />
            <stop offset="1" stopColor="#6c6c72" />
          </linearGradient>
        </defs>

        {/* workplane */}
        <polygon points="256,685 881,837 1236,532 612,381" fill="#b6f0e0" stroke="#55b59b" strokeWidth="2" />
        <polygon points="269,683 879,830 1222,535 612,388" fill="#e9f8f4" />
        <g stroke="#111" strokeWidth="1.200" fill="none">
          <path d="M285 681l20-8" />
          <path d="M307 678l-4 7 10-3v6l9-6" />
          <path d="M328 682l11-2-11 11" />
        </g>

        {/* body */}
        <polygon points="420,493 829,592 835,758 425,659" fill="#cbbfbf" />
        <polygon points="829,592 1061,393 1067,559 835,758" fill="#c5c4d1" />
        <polygon points="420,493 829,592 1061,393 651,292" fill="#5d5d5d" />
        <g stroke="#16c878" strokeWidth="1.500" fill="none">
          <path d="M425 659L420 493L651 292L1061 393L1067 559" />
          <path d="M420 493L829 592L1061 393M829 592L835 758" />
        </g>
        <path d="M425 659L835 758L1067 559" stroke="#000" strokeWidth="3" fill="none" />

        {STUDS.map(([x, y]) => (
          <Stud key={x} x={x} y={y} />
        ))}
      </svg>
    </main>
  );
}

/* ---------- command line and status bar ---------- */

// four arrows pointing away from the centre of an s x s frame
function FitShape({ s }) {
  const c = s / 2;
  const a = s > 22 ? 4 : 3;
  return (
    <g>
      <rect x="1" y="1" width={s - 2} height={s - 2} fill="#fff" stroke="#1a1aa0" strokeWidth="1.5" />
      {[0, 90, 180, 270].map((deg) => (
        <path
          key={deg}
          d={`M${c} 3l${a} ${a}h${2 - a}v3h-4v-3h${2 - a}z`}
          transform={`rotate(${deg} ${c} ${c})`}
          fill="#22d3e8"
        />
      ))}
    </g>
  );
}

function Grip({ className = "" }) {
  return (
    <Svg w={3} h={32} className={className}>
      <path d="M1.500 0v32" stroke="#b0b8c0" strokeWidth="2" strokeDasharray="2 3" />
    </Svg>
  );
}

function CommandBar() {
  return (
    <div className="flex h-[46px] items-center pt-0.5 pr-[19px] pl-1">
      <Grip />
      <div className="ml-1 flex h-7 w-[438px] items-center rounded-sm border border-[#8c8c8c] bg-white">
        <input type="text" aria-label="Command input" className="h-full min-w-0 flex-1 px-1 outline-none" />
        <IconButton label="Command history" className="w-5">
          <Svg w={11} h={7}>
            <path d="M1 1l4.500 4.500L10 1" stroke="#777" strokeWidth="1.5" />
          </Svg>
        </IconButton>
      </div>
      <IconButton label="Enter" className="ml-0.5 h-[25px] w-[31px] rounded border border-[#efefef]">
        <Svg w={24} h={16}>
          <path d="M22 1v6.500H7" stroke="#999" strokeWidth="4" />
          <path d="M0 8l9-7v14z" fill="#999" />
        </Svg>
      </IconButton>
      <IconButton label="Cancel" className="ml-[3px] h-[26px] w-[31px] rounded border border-[#e8e8e8]">
        <Svg w={16} h={18}>
          <path d="M2 2c4 4 8 9 12 14M14 2C9 6 5 11 2 16" stroke="#8c8c8c" strokeWidth="2" />
        </Svg>
      </IconButton>

      <div className="ml-auto flex items-center gap-[9px]">
        <Grip />
        <IconButton label="Fit view">
          <Svg w={26} h={26}><FitShape s={26} /></Svg>
        </IconButton>
        <IconButton label="Pull">
          <Svg w={26} h={28}>
            <path d="M1 24l6-6h18l-6 6z" stroke="#1a1ac0" strokeWidth="1.5" />
            <path d="M12 27V9h3v18z" fill="#d8a018" stroke="#94690a" />
            <path d="M13.500 1l4 6v3h-8V7z" fill="#f3b61c" stroke="#94690a" />
          </Svg>
        </IconButton>
        <IconButton label="Circle by center">
          <Svg w={26} h={28}>
            <path d="M13 0v14H0" stroke="#d8cd36" strokeWidth="2" strokeDasharray="4 1" />
            <circle cx="13" cy="14" r="12" stroke="#2a2ae0" strokeWidth="2" />
            <circle cx="13" cy="14" r="2" fill="#ffb43a" stroke="#e06010" />
          </Svg>
        </IconButton>
        <IconButton label="Rectangle by corners">
          <Svg w={28} h={28}>
            <path d="M9 0v13M0 13h10" stroke="#b8b08c" strokeWidth="3" />
            <rect x="11" y="15" width="15" height="11" stroke="#0b0bff" strokeWidth="2" />
            <rect x="8" y="12" width="4" height="4" fill="#d88018" />
            <rect x="24" y="24" width="4" height="4" fill="#d88018" />
          </Svg>
        </IconButton>
        <IconButton label="New workplane">
          <Svg w={26} h={28}>
            <rect x="2.500" y="4.500" width="20" height="20" fill="#fff" stroke="#22aa22" strokeWidth="4" />
            <rect x="2.500" y="4.500" width="20" height="20" stroke="#66ff44" strokeWidth="2" />
            <Spark x={0} y={1} />
          </Svg>
        </IconButton>
        <IconButton label="Section view">
          <Svg w={26} h={30}>
            <path d="M4 4l4-3h11l-3 3z" fill="#b8b8ff" />
            <path d="M4 4h12v11H4z" fill="#8484f0" />
            <path d="M16 4l3-3v10l-3 4z" fill="#5454c0" />
            <path d="M16 13l3-5h7l-5 7H0l2 2h22" fill="#6c7888" />
            <path d="M4 18h14v6H4z" fill="#9a9af4" />
            <path d="M4 25h14M4 27h14M4 29h14" stroke="#9a9af4" strokeDasharray="2 1" />
          </Svg>
        </IconButton>
      </div>
    </div>
  );
}

function StatusBar() {
  return (
    <footer className="flex h-[35px] items-center border-t-2 border-[#9a9c9e] bg-[#edeff1] pb-1.5 pl-[11px] text-[#505050]">
      <p className="min-w-0 flex-1 truncate font-['Noto_Sans','Open_Sans',sans-serif]">
        Click a command or preselect assembly, part, workplane, face or edge. Hold SHIFT-key to select mu...
      </p>
      <div className="mr-2.5 ml-1 h-6 border-l-2 border-[#dcdee0]" />
      <IconButton label="Debug">
        <Svg w={22} h={16}>
          <path d="M2 3h3l3 2M20 3h-3l-3 2M0 8h22M2 13h3l3-2M20 13h-3l-3-2" stroke="#555" strokeWidth="1.5" />
          <ellipse cx="11" cy="8" rx="6" ry="5" fill="#b8b820" stroke="#777" />
          <path d="M6 6h10" stroke="#e4e4a0" strokeWidth="2" />
        </Svg>
      </IconButton>
      <IconButton label="Warnings" className="ml-2.5">
        <Svg w={22} h={20}>
          <path d="M11 1l10 18H1z" fill="#ffd91c" stroke="#d09a10" strokeLinejoin="round" />
          <path d="M11 6v7M11 15v2" stroke="#222" strokeWidth="2" />
        </Svg>
      </IconButton>
      <button type="button" className="ml-1.5 h-[25px] w-[38px] border border-[#d8dadc] bg-white pr-1 text-right text-[#222]">
        /w1
      </button>
      <button type="button" className="ml-0.5 h-[25px] w-[38px] border border-[#d8dadc] bg-white pr-1 text-right text-[#222]">
        /p1
      </button>
      <button type="button" className="ml-1.5">Catch</button>
      <button type="button" className="ml-[18px]">Units</button>
      <div className="mr-1 ml-4 h-6 border-l border-[#d0d3d6]" />
      <div className="grid w-[137px] items-center">
        <select
          aria-label="Selection filter"
          className="col-start-1 row-start-1 h-[25px] appearance-none border border-[#d8dadc] bg-white pl-0.5 text-[#222]"
        >
          <option>All</option>
        </select>
        <Caret className="pointer-events-none col-start-1 row-start-1 mr-1.5 justify-self-end" />
      </div>
      <div className="ml-2 flex items-center gap-[13px]">
        <IconButton label="Viewport window">
          <Svg>
            <rect x="1" y="2" width="18" height="15" rx="1" fill="#dfe6f0" stroke="#5a7298" strokeWidth="1.5" />
            <rect x="4" y="5" width="12" height="9" fill="#a8ccf8" stroke="#3a66c0" />
            <path d="M6 8h8M6 11h8" stroke="#4a86e0" />
          </Svg>
        </IconButton>
        <IconButton label="Zoom window">
          <Svg>
            <rect x="1" y="1" width="18" height="18" fill="#fff" stroke="#1a1aa0" strokeWidth="1.5" />
            <path d="M5 3v13M3 5h13M15 3v4M3 15h6" stroke="#222" strokeDasharray="2 1" />
            <circle cx="11" cy="11" r="4.500" fill="#4cc8c8" stroke="#2a7080" />
            <path d="M14 14l4 4" stroke="#1f7090" strokeWidth="3" />
          </Svg>
        </IconButton>
        <IconButton label="Previous view">
          <Svg>
            <rect x="1" y="1" width="18" height="18" fill="#fff" stroke="#1a1aa0" strokeWidth="1.5" />
            <path d="M5 10l10-5v10z" fill="#0c0c78" />
          </Svg>
        </IconButton>
        <IconButton label="Fit all">
          <Svg><FitShape s={20} /></Svg>
        </IconButton>
        <IconButton label="Step views">
          <Svg>
            <path d="M1 9l7-6v12zM19 9l-7-6v12z" fill="#9a9a9a" />
          </Svg>
        </IconButton>
      </div>
      <Svg w={14} h={14} className="mt-4 ml-3.5">
        <path d="M11 1h2v2h-2zM6 6h2v2H6zM11 6h2v2h-2zM1 11h2v2H1zM6 11h2v2H6zM11 11h2v2h-2z" fill="#b8bcc0" />
      </Svg>
    </footer>
  );
}

export default function App() {
  return (
    <div className="flex h-screen flex-col bg-[#3f4a4d] pt-[2px] font-['Open_Sans','Noto_Sans',sans-serif] text-sm">
      <div className="flex min-h-0 flex-1 flex-col rounded-lg border-2 border-[#929496] bg-[#fbfbfb] px-[7px]">
        <TitleBar />
        <TabRow />
        <Ribbon />
        <div className="mt-1 flex min-h-0 flex-1 gap-[5px]">
          <StructureBrowser />
          <Viewport />
        </div>
        <CommandBar />
        <StatusBar />
      </div>
    </div>
  );
}
